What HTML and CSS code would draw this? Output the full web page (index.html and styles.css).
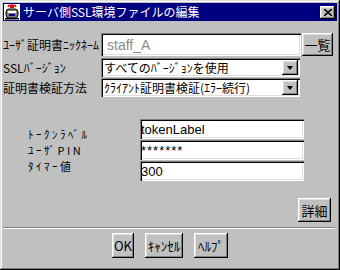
FILE: index.html
```html
<!DOCTYPE html>
<html lang="ja">
<head>
    <meta charset="UTF-8">
    <title>サーバ側SSL環境ファイルの編集</title>
    <link rel="stylesheet" href="styles.css">
</head>
<body>
    <div class="window">
        <div class="titlebar">
            <svg class="app-icon" width="16" height="16" viewBox="0 0 16 16">
                <rect x="0" y="0" width="16" height="16" fill="#fff"/>
                <path d="M4 3 Q5 0 7 2 Q8 0 9 2 Q11 0 12 3" fill="none" stroke="#e00000" stroke-width="1.4"/>
                <rect x="6" y="2" width="4" height="2" fill="#e00000"/>
                <rect x="2" y="5" width="12" height="9" rx="3" fill="#808080" stroke="#000" stroke-width="1"/>
                <rect x="4" y="7" width="8" height="2" fill="#fff"/>
                <rect x="5" y="10" width="6" height="2" fill="#000080"/>
                <rect x="1" y="14" width="14" height="1.5" fill="#000"/>
            </svg>
            <span class="title">サーバ側SSL環境ファイルの編集</span>
            <button class="btn close-btn">
                <svg width="8" height="7" viewBox="0 0 8 7"><path d="M0 0 L8 7 M8 0 L0 7" stroke="#000" stroke-width="1.6"/></svg>
            </button>
        </div>

        <div class="content">
            <div class="row row-nick">
                <span class="label">ﾕｰｻﾞ証明書ﾆｯｸﾈｰﾑ</span>
                <input type="text" class="field field-nick" value="staff_A" readonly>
                <button class="btn list-btn">一覧</button>
            </div>
            <div class="row">
                <span class="label">SSLﾊﾞｰｼﾞｮﾝ</span>
                <div class="select">
                    <span class="select-text">すべてのﾊﾞｰｼﾞｮﾝを使用</span>
                    <span class="drop"><span class="arrow"></span></span>
                </div>
            </div>
            <div class="row">
                <span class="label">証明書検証方法</span>
                <div class="select">
                    <span class="select-text">ｸﾗｲｱﾝﾄ証明書検証(ｴﾗｰ続行)</span>
                    <span class="drop"><span class="arrow"></span></span>
                </div>
            </div>

            <div class="token">
                <div class="token-labels">
                    <div>ﾄｰｸﾝﾗﾍﾞﾙ</div>
                    <div>ﾕｰｻﾞPIN</div>
                    <div>ﾀｲﾏｰ値</div>
                </div>
                <div class="token-fields">
                    <input type="text" class="field" value="tokenLabel">
                    <input type="text" class="field field-pin" value="*******">
                    <input type="text" class="field" value="300">
                </div>
            </div>

            <div class="detail-row">
                <button class="btn detail-btn">詳細</button>
            </div>
        </div>

        <div class="separator"></div>

        <div class="footer">
            <button class="btn ok-btn">OK</button>
            <button class="btn cancel-btn">ｷｬﾝｾﾙ</button>
            <button class="btn help-btn">ﾍﾙﾌﾟ</button>
        </div>
    </div>
</body>
</html>
```

FILE: styles.css
```css
* {
    margin: 0;
    padding: 0;
    box-sizing: border-box;
}

body {
    background: #c0c0c0;
    font-family: "Noto Sans CJK JP", sans-serif;
    font-size: 12px;
    color: #000;
}

.window {
    width: 340px;
    height: 270px;
    padding: 3px;
    background: #c0c0c0;
    display: flex;
    flex-direction: column;
    box-shadow: inset -1px -1px #000, inset 1px 1px #dfdfdf,
                inset -2px -2px #808080, inset 2px 2px #fff;
}

/* title bar */
.titlebar {
    height: 18px;
    background: #000080;
    display: flex;
    align-items: center;
    padding-left: 1px;
}
.app-icon {
    margin-right: 3px;
}
.title {
    color: #fff;
    font-size: 12px;
    line-height: 16px;
    flex: 1;
}

.btn {
    background: #c0c0c0;
    border: none;
    font-family: "Noto Sans CJK JP", sans-serif;
    font-size: 13px;
    color: #000;
    box-shadow: inset -1px -1px #000, inset 1px 1px #fff,
                inset -2px -2px #808080, inset 2px 2px #dfdfdf;
}

.close-btn {
    width: 15px;
    height: 13px;
    margin-right: 2px;
    display: flex;
    align-items: center;
    justify-content: center;
}

/* form */
.content {
    flex: 1;
    display: flex;
    flex-direction: column;
}

.row {
    display: flex;
    align-items: center;
    height: 19px;
    margin-top: 1px;
}
.row-nick {
    height: 23px;
    margin-top: 12px;
    margin-bottom: 1px;
}

.label {
    width: 98px;
    line-height: 16px;
    white-space: nowrap;
}

.field {
    border: none;
    outline: none;
    background: #fff;
    font-family: "Liberation Sans", Arial, sans-serif;
    font-size: 13px;
    padding: 0 2px;
    box-shadow: inset 1px 1px #808080, inset 2px 2px #000,
                inset -1px -1px #fff, inset -2px -2px #dfdfdf;
}

.field-nick {
    width: 200px;
    height: 23px;
    padding-left: 6px;
    font-size: 14px;
    color: #8c8c8c;
}

.list-btn {
    width: 31px;
    height: 23px;
    margin-left: 1px;
}

.select {
    width: 199px;
    height: 19px;
    background: #fff;
    display: flex;
    align-items: center;
    padding: 2px 2px 2px 3px;
    box-shadow: inset 1px 1px #808080, inset 2px 2px #000,
                inset -1px -1px #fff, inset -2px -2px #dfdfdf;
}
.select-text {
    flex: 1;
    line-height: 15px;
    white-space: nowrap;
    overflow: hidden;
}
.drop {
    width: 16px;
    height: 15px;
    background: #c0c0c0;
    display: flex;
    align-items: center;
    justify-content: center;
    box-shadow: inset -1px -1px #000, inset 1px 1px #fff,
                inset -2px -2px #808080, inset 2px 2px #dfdfdf;
}
.arrow {
    width: 0;
    height: 0;
    border-left: 3.5px solid transparent;
    border-right: 3.5px solid transparent;
    border-top: 4px solid #000;
}

/* token section */
.token {
    display: flex;
    margin-top: 22px;
}
.token-labels {
    width: 137px;
    padding-left: 25px;
    padding-top: 7px;
}
.token-labels div {
    font-size: 11px;
    line-height: 16px;
    letter-spacing: 2.5px;
    white-space: nowrap;
}
.token-fields {
    display: flex;
    flex-direction: column;
    gap: 1px;
}
.token-fields .field {
    width: 164px;
    height: 20px;
    padding-left: 1px;
}
.field-pin {
    letter-spacing: 1px;
}

.detail-row {
    display: flex;
    justify-content: flex-end;
    margin-top: 17px;
    padding-right: 6px;
}
.detail-btn {
    width: 33px;
    height: 24px;
}

.separator {
    height: 2px;
    margin: 0 2px 4px 0;
    border-top: 1px solid #808080;
    border-bottom: 1px solid #fff;
}

.footer {
    display: flex;
    justify-content: center;
    gap: 11px;
    margin-bottom: 9px;
}
.footer .btn {
    height: 25px;
}
.ok-btn {
    width: 22px;
}
.cancel-btn {
    width: 38px;
}
.help-btn {
    width: 34px;
}
```
